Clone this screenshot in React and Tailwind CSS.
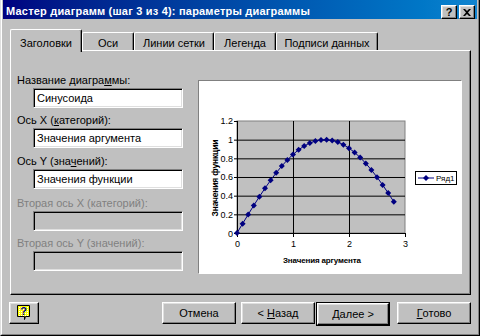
import React from 'react';

const raised =
  'border border-t-white border-l-white border-r-black border-b-black shadow-[inset_-1px_-1px_0_#808080,inset_1px_1px_0_#dfdfdf]';
const sunken =
  'border border-t-[#808080] border-l-[#808080] border-r-white border-b-white shadow-[inset_1px_1px_0_#000,inset_-1px_-1px_0_#dfdfdf]';

function Field({ label, value, disabled, className }) {
  return (
    <div className={className}>
      <div className={`h-[13px] leading-[13px] ${disabled ? 'text-[#808080]' : 'text-black'}`}>{label}</div>
      <div
        className={`mt-px ml-[16px] w-[150px] h-[20px] pl-[3px] flex items-center ${sunken} ${
          disabled ? 'bg-[#c0c0c0]' : 'bg-white'
        }`}
      >
        {value}
      </div>
    </div>
  );
}

function Chart() {
  const px = (x) => 39 + x * 56;
  const py = (y) => 153 - (y / 0.2) * 18.667;
  const pts = [];
  for (let i = 0; i <= 28; i++) {
    const x = i / 10;
    pts.push([px(x), py(Math.sin(x))]);
  }
  const diamond = (x, y, key) => (
    <polygon key={key} points={`${x},${y - 3} ${x + 3},${y} ${x},${y + 3} ${x - 3},${y}`} fill="#000080" />
  );
  const ys = ['0', '0.2', '0.4', '0.6', '0.8', '1', '1.2'];
  return (
    <svg width="262" height="192" className="block">
      <g transform="translate(-1,-1)" fontFamily="Liberation Sans, Arial, sans-serif">
        <text x="132" y="101" fontSize="10" textAnchor="middle" fill="#000">
          Синусоида
        </text>
        <rect x="39" y="41" width="168" height="112" fill="#c0c0c0" stroke="#808080" />
        {ys.slice(1, 6).map((_, i) => (
          <line key={i} x1="39" x2="207" y1={py((i + 1) * 0.2) + 0.5} y2={py((i + 1) * 0.2) + 0.5} stroke="#000" />
        ))}
        <line x1={px(1) + 0.5} x2={px(1) + 0.5} y1="41" y2="153" stroke="#000" />
        <line x1={px(2) + 0.5} x2={px(2) + 0.5} y1="41" y2="153" stroke="#000" />
        <line x1="39.5" x2="39.5" y1="41" y2="153" stroke="#000" />
        <line x1="39" x2="207" y1="153.5" y2="153.5" stroke="#000" />
        {ys.map((t, i) => (
          <g key={t}>
            <line x1="36" x2="40" y1={py(i * 0.2) + 0.5} y2={py(i * 0.2) + 0.5} stroke="#000" />
            <text x="35" y={py(i * 0.2) + 3.5} fontSize="9" textAnchor="end" fill="#000">
              {t}
            </text>
          </g>
        ))}
        {[0, 1, 2, 3].map((t) => (
          <g key={t}>
            <line x1={px(t) + 0.5} x2={px(t) + 0.5} y1="153" y2="157" stroke="#000" />
            <text x={px(t) + 0.5} y="167" fontSize="9" textAnchor="middle" fill="#000">
              {t}
            </text>
          </g>
        ))}
        <text x="124" y="183" fontSize="8" fontWeight="bold" textAnchor="middle" textLength="78" fill="#000">
          Значения аргумента
        </text>
        <text
          transform="translate(20,98) rotate(-90)"
          fontSize="8.5"
          fontWeight="bold"
          textAnchor="middle"
          textLength="77"
          fill="#000"
        >
          Значения функции
        </text>
        <polyline points={pts.map((p) => p.join(',')).join(' ')} fill="none" stroke="#000080" />
        {pts.map((p, i) => diamond(p[0], p[1], i))}
        <rect x="217.5" y="91.5" width="41" height="13" fill="#fff" stroke="#000" />
        <line x1="220" x2="236" y1="98" y2="98" stroke="#000080" />
        {diamond(228, 98, 'l')}
        <text x="238" y="101" fontSize="8" fill="#000">
          Ряд1
        </text>
      </g>
    </svg>
  );
}

function Tab({ children, w, active }) {
  if (active) {
    return (
      <div
        className="relative z-10 -mb-[2px] h-[23px] bg-[#c0c0c0] rounded-t-[2px] border-t border-l border-r border-t-white border-l-white border-r-black shadow-[inset_-1px_0_0_#808080] flex items-start justify-center pt-[5px]"
        style={{ width: w }}
      >
        {children}
      </div>
    );
  }
  return (
    <div
      className="h-[18px] bg-[#c0c0c0] rounded-t-[2px] border-t border-l border-r border-t-white border-l-white border-r-black shadow-[inset_-1px_0_0_#808080] flex items-start justify-center pt-[2px]"
      style={{ width: w }}
    >
      {children}
    </div>
  );
}

function Btn({ children, w = 74, className = '' }) {
  return (
    <div className={`h-[22px] flex items-center justify-center bg-[#c0c0c0] ${raised} ${className}`} style={{ width: w }}>
      {children}
    </div>
  );
}

export default function App() {
  return (
    <div className="w-[480px] h-[336px] bg-[#c0c0c0] border-l border-r border-b border-l-[#dfdfdf] border-r-black border-b-black text-[11px] text-black font-['Liberation_Sans',Arial,sans-serif]">
      <div className="h-full border-l border-r border-b border-l-white border-r-[#808080] border-b-[#808080] px-px pb-px flex flex-col">
        <div className="h-[19px] flex items-start bg-gradient-to-r from-[#000080] to-[#1084d0] pl-[3px] pr-[2px]">
          <div className="pt-[5px] text-white font-bold text-[11px] leading-[13px] flex-1 tracking-[0.2px]">
            Мастер диаграмм (шаг 3 из 4): параметры диаграммы
          </div>
          <div className="flex gap-[2px] pt-[5px]">
            <div className={`w-[16px] h-[14px] bg-[#c0c0c0] ${raised} flex items-center justify-center font-bold text-[11px] leading-none`}>
              ?
            </div>
            <div className={`w-[16px] h-[14px] bg-[#c0c0c0] ${raised} flex items-center justify-center`}>
              <svg width="8" height="7" viewBox="0 0 8 7">
                <path d="M0 0h2l2 2 2-2h2L5 3.5 8 7H6L4 5 2 7H0l3-3.5z" fill="#000" />
              </svg>
            </div>
          </div>
        </div>

        <div className="pt-[10px] pl-[7px] pr-[6px]">
          <div className="flex items-end h-[21px]">
            <Tab w={72} active>
              Заголовки
            </Tab>
            <Tab w={52}>Оси</Tab>
            <Tab w={80}>Линии сетки</Tab>
            <Tab w={62}>Легенда</Tab>
            <Tab w={102}>Подписи данных</Tab>
          </div>
          <div className="h-[245px] border border-t-white border-l-white border-r-black border-b-black shadow-[inset_-1px_-1px_0_#808080] flex items-start">
            <div className="w-[172px] pl-[6px] pt-[23px]">
              <Field
                label={
                  <>
                    Название диагра<span className="underline">м</span>мы:
                  </>
                }
                value="Синусоида"
              />
              <Field
                className="mt-[6px]"
                label={
                  <>
                    Ось X (<span className="underline">к</span>атегорий):
                  </>
                }
                value="Значения аргумента"
              />
              <Field
                className="mt-[7px]"
                label={
                  <>
                    Ось Y (зна<span className="underline">ч</span>ений):
                  </>
                }
                value="Значения функции"
              />
              <Field className="mt-[8px]" label="Вторая ось X (категорий):" value="" disabled />
              <Field className="mt-[6px]" label="Вторая ось Y (значений):" value="" disabled />
            </div>
            <div className="ml-[15px] mt-[29px] w-[264px] h-[194px] bg-white border border-t-[#808080] border-l-[#808080] border-r-white border-b-white">
              <Chart />
            </div>
          </div>
        </div>

        <div className="mt-[7px] pl-[6px] pr-[6px] flex items-start">
          <Btn w={30}>
            <svg width="14" height="16" viewBox="0 0 14 16">
              <defs>
                <pattern id="dots" width="2" height="2" patternUnits="userSpaceOnUse">
                  <rect width="2" height="2" fill="#ffff00" />
                  <rect width="1" height="1" fill="#ffffff" />
                </pattern>
              </defs>
              <path d="M0.5 0.5h12v11h-4l-1 3v-3h-7z" fill="url(#dots)" stroke="#000" />
              <text x="6.5" y="10" fontSize="11" fontWeight="bold" textAnchor="middle" fill="#000080" fontFamily="Liberation Sans, Arial, sans-serif">
                ?
              </text>
            </svg>
          </Btn>
          <Btn className="ml-[123px]">Отмена</Btn>
          <Btn className="ml-[5px]">
            &lt; <span className="underline ml-[3px]">Н</span>азад
          </Btn>
          <div className="ml-px border border-black">
            <Btn w={72}>Далее &gt;</Btn>
          </div>
          <Btn className="ml-[7px]">
            <span className="underline">Г</span>отово
          </Btn>
        </div>
      </div>
    </div>
  );
}
